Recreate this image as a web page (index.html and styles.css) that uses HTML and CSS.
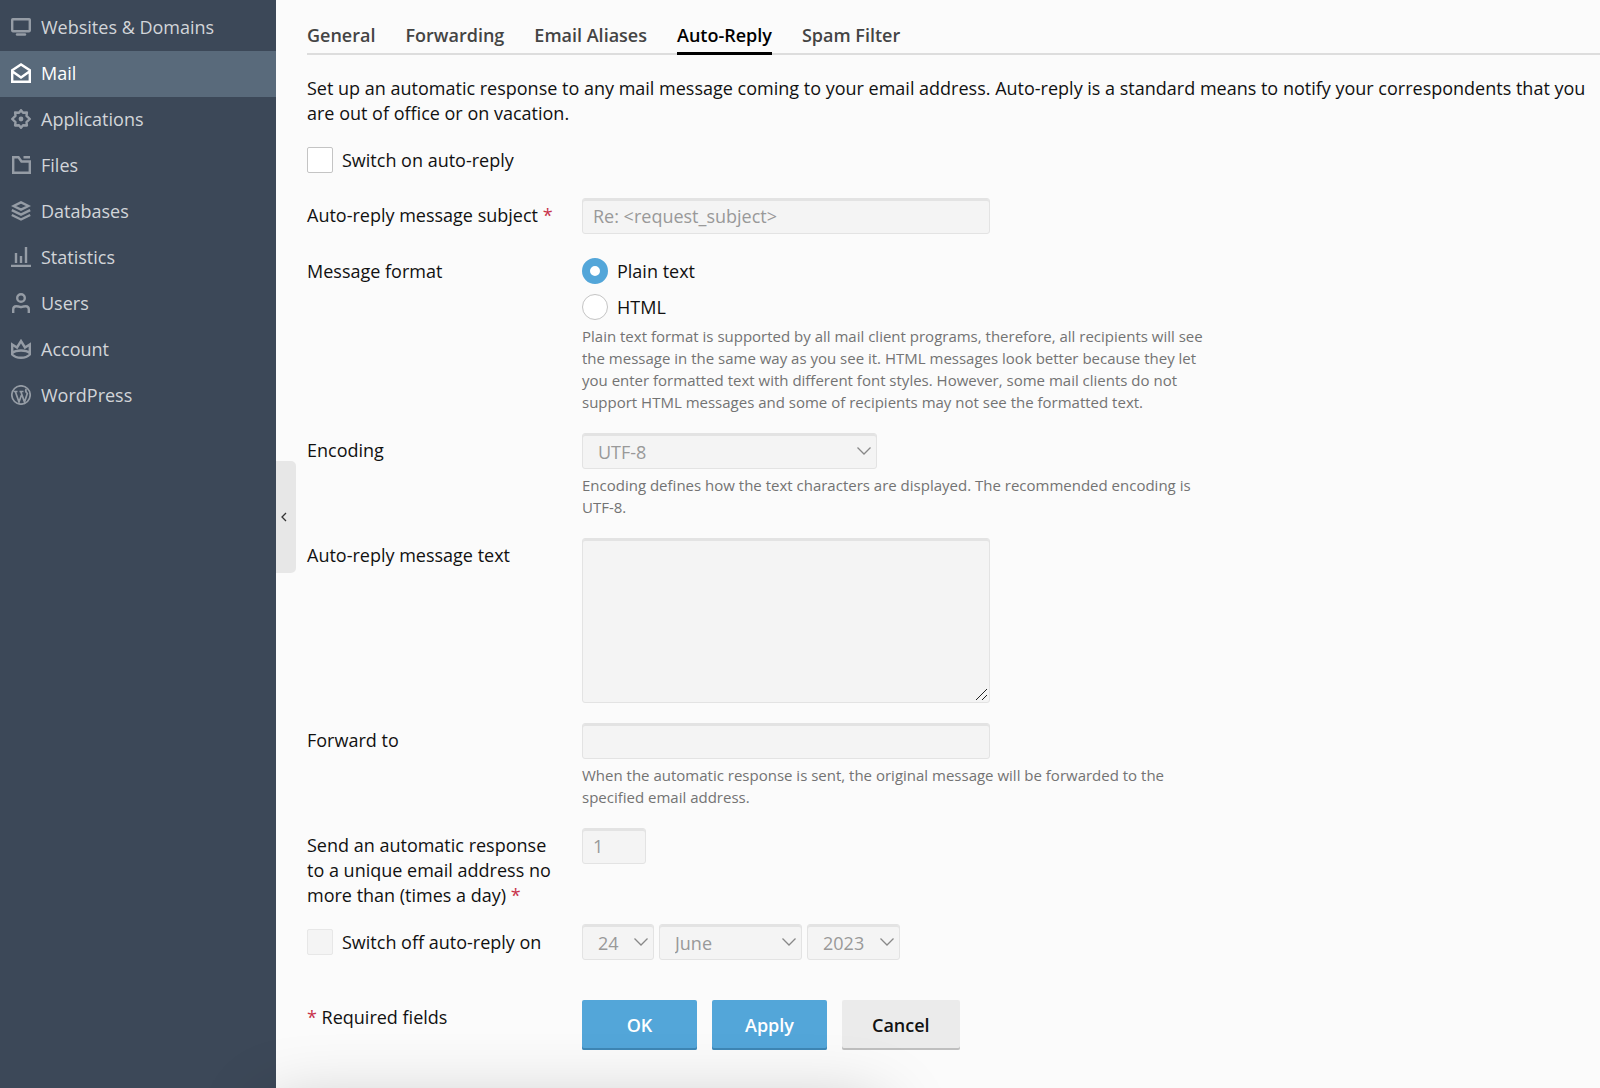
FILE: index.html
```html
<!DOCTYPE html>
<html lang="en">
<head>
    <meta charset="UTF-8">
    <meta name="viewport" content="width=device-width, initial-scale=1.0">
    <title>Auto-Reply</title>
    <link rel="stylesheet" href="styles.css">
</head>
<body>
    <div class="layout">
        <aside class="sidebar">
            <nav class="menu">
                <a href="#" class="menu-item">
                    <svg class="icon" viewBox="0 0 20 20"><rect x="1.200" y="2.200" width="17.600" height="12" rx=".6"/><path d="M6 17.500h8" stroke-linecap="round"/></svg>
                    Websites &amp; Domains
                </a>
                <a href="#" class="menu-item active">
                    <svg class="icon" viewBox="0 0 20 20"><path d="M1.200 7.200L10 1.500l8.800 5.700v11.600H1.200zM1.500 8.500L10 14.500l8.500-6"/></svg>
                    Mail
                </a>
                <a href="#" class="menu-item">
                    <svg class="icon" viewBox="0 0 20 20"><path stroke-linejoin="round" d="M8 3.800L10 1.200l2 2.600 3.900-.3-.4 3.300L18.800 10l-3.300 3.200.4 3.300-3.900-.3-2 2.600-2-2.600-3.900.3.400-3.300L1.200 10l3.300-3.200-.4-3.300z"/><circle class="fill" cx="10" cy="10" r="2.400"/></svg>
                    Applications
                </a>
                <a href="#" class="menu-item">
                    <svg class="icon" viewBox="0 0 20 20"><path d="M2.200 2.200h5.300l3 4.300h8.300v11.300H2.200zM12.500 2.200h6.500"/></svg>
                    Files
                </a>
                <a href="#" class="menu-item">
                    <svg class="icon" viewBox="0 0 20 20"><path d="M10 1.300l7.500 3.700-7.500 3.700L2.500 5zM.8 9.200L10 13.700l9.200-4.500M.8 14L10 18.500l9.200-4.500"/></svg>
                    Databases
                </a>
                <a href="#" class="menu-item">
                    <svg class="icon" viewBox="0 0 20 20"><path d="M0 19h20M5 6v10M10 9v7M15 0v16"/></svg>
                    Statistics
                </a>
                <a href="#" class="menu-item">
                    <svg class="icon" viewBox="0 0 20 20"><circle cx="10" cy="5" r="3.800"/><path d="M2.200 20v-3.500q0-3.300 3-3.300 2 0 4.800 1 2.800-1 4.800-1 3 0 3 3.300V20"/></svg>
                    Users
                </a>
                <a href="#" class="menu-item">
                    <svg class="icon" viewBox="0 0 20 20"><path d="M1.200 5.500l4.800 3L10 2l4 6.500 4.800-3v10q-3 3.300-8.800 3.300t-8.800-3.300zM1.200 14q3-2.500 8.800-2.500t8.800 2.500"/></svg>
                    Account
                </a>
                <a href="#" class="menu-item">
                    <svg class="icon wp" viewBox="0 0 20 20"><circle cx="10" cy="10" r="9.200"/><path d="M2.500 6.500h4M8.500 6.500h4M4.300 6.500l3.700 10.500L10.500 10M9.800 6.500l3.700 10.500 2.800-8.500q-2.600-2.500-1-4.500"/></svg>
                    WordPress
                </a>
            </nav>
            <button class="collapse" type="button" aria-label="Collapse menu">
                <svg viewBox="0 0 6 10"><path d="M5 1L1 5l4 4"/></svg>
            </button>
        </aside>

        <main class="content">
            <nav class="tabs">
                <a href="#" class="tab">General</a>
                <a href="#" class="tab">Forwarding</a>
                <a href="#" class="tab">Email Aliases</a>
                <a href="#" class="tab active">Auto-Reply</a>
                <a href="#" class="tab">Spam Filter</a>
            </nav>

            <p class="intro">Set up an automatic response to any mail message coming to your email address. Auto-reply is a standard means to notify your correspondents that you are out of office or on vacation.</p>

            <form class="form">
                <label class="choice switch-on">
                    <input type="checkbox" class="checkbox">
                    Switch on auto-reply
                </label>

                <div class="row">
                    <label class="label" for="subject">Auto-reply message subject <span class="required">*</span></label>
                    <div class="field">
                        <input type="text" id="subject" class="input" value="Re: &lt;request_subject&gt;" disabled>
                    </div>
                </div>

                <div class="row" role="radiogroup" aria-labelledby="format-label">
                    <span class="label" id="format-label">Message format</span>
                    <div class="field">
                        <div class="choices">
                            <label class="choice"><input type="radio" name="format" class="radio" checked> Plain text</label>
                            <label class="choice"><input type="radio" name="format" class="radio"> HTML</label>
                        </div>
                        <p class="hint">Plain text format is supported by all mail client programs, therefore, all recipients will see the message in the same way as you see it. HTML messages look better because they let you enter formatted text with different font styles. However, some mail clients do not support HTML messages and some of recipients may not see the formatted text.</p>
                    </div>
                </div>

                <div class="row">
                    <label class="label" for="encoding">Encoding</label>
                    <div class="field">
                        <select id="encoding" class="input select encoding" disabled>
                            <option>UTF-8</option>
                        </select>
                        <p class="hint">Encoding defines how the text characters are displayed. The recommended encoding is UTF-8.</p>
                    </div>
                </div>

                <div class="row">
                    <label class="label" for="text">Auto-reply message text</label>
                    <div class="field">
                        <textarea id="text" class="input textarea" disabled></textarea>
                    </div>
                </div>

                <div class="row">
                    <label class="label" for="forward">Forward to</label>
                    <div class="field">
                        <input type="text" id="forward" class="input" disabled>
                        <p class="hint">When the automatic response is sent, the original message will be forwarded to the specified email address.</p>
                    </div>
                </div>

                <div class="row limit-row">
                    <label class="label" for="limit">Send an automatic response to a unique email address no more than (times a day) <span class="required">*</span></label>
                    <div class="field">
                        <input type="text" id="limit" class="input limit" value="1" disabled>
                    </div>
                </div>

                <div class="row">
                    <label class="choice">
                        <input type="checkbox" class="checkbox" disabled>
                        Switch off auto-reply on
                    </label>
                    <div class="field date">
                        <select class="input select day" aria-label="Day" disabled>
                            <option>24</option>
                        </select>
                        <select class="input select month" aria-label="Month" disabled>
                            <option>June</option>
                        </select>
                        <select class="input select year" aria-label="Year" disabled>
                            <option>2023</option>
                        </select>
                    </div>
                </div>

                <div class="row actions">
                    <span class="label"><span class="required">*</span> Required fields</span>
                    <div class="buttons">
                        <button type="submit" class="button primary">OK</button>
                        <button type="button" class="button primary">Apply</button>
                        <button type="button" class="button">Cancel</button>
                    </div>
                </div>
            </form>
        </main>
    </div>
    <div class="bottom-shade"></div>
</body>
</html>
```

FILE: styles.css
```css
* {
    box-sizing: border-box;
}
body {
    margin: 0;
    font-family: 'Open Sans', sans-serif;
    font-size: 18px;
    line-height: 25px;
    color: #111;
    background: #fbfbfb;
}
p {
    margin: 0;
}
.layout {
    display: flex;
    min-height: 100vh;
}

/* Sidebar */
.sidebar {
    position: relative;
    flex: 0 0 276px;
    background: #3c4858;
}
.menu {
    display: flex;
    flex-direction: column;
    padding-top: 5px;
}
.menu-item {
    display: flex;
    align-items: center;
    gap: 10px;
    height: 46px;
    padding: 0 11px 2px;
    color: #d2d5d9;
    text-decoration: none;
}
.menu-item.active {
    color: #fff;
    background: #596a7b;
}
.icon {
    width: 20px;
    height: 20px;
    fill: none;
    stroke: #959ca5;
    stroke-width: 2.4;
}
.icon.wp {
    stroke-width: 1.7;
}
.icon .fill {
    fill: #959ca5;
    stroke: none;
}
.active .icon {
    stroke: #fff;
}
.collapse {
    position: absolute;
    top: 461px;
    left: 100%;
    width: 20px;
    height: 112px;
    padding: 0 4px 0 0;
    border: none;
    border-radius: 0 5px 5px 0;
    background: #e7e7e7;
    cursor: pointer;
}
.collapse svg {
    width: 6px;
    height: 10px;
    fill: none;
    stroke: #333;
    stroke-width: 1.3;
}

/* Content */
.content {
    flex: 1;
    min-width: 0;
    padding: 15px 0 37px 31px;
}
.tabs {
    display: flex;
    gap: 30px;
    margin-bottom: 21px;
    box-shadow: inset 0 -2px #ddd;
}
.tab {
    padding: 8px 0 4px;
    border-bottom: 3px solid transparent;
    font-weight: 600;
    color: #444;
    text-decoration: none;
}
.tab.active {
    color: #000;
    border-color: #000;
}
.intro {
    margin-bottom: 21px;
    padding-right: 10px;
}

/* Form */
.row {
    display: grid;
    grid-template-columns: 250px minmax(0, 640px);
    column-gap: 25px;
    margin-bottom: 20px;
}
.limit-row {
    margin-bottom: 16px;
}
.label {
    padding-top: 5px;
}
.required {
    color: #c8324a;
}
.choice {
    display: flex;
    align-items: center;
    gap: 9px;
}
.switch-on {
    margin-bottom: 25px;
}
.choices {
    display: flex;
    flex-direction: column;
    gap: 10px;
    padding-top: 4px;
}
.checkbox,
.radio {
    appearance: none;
    width: 26px;
    height: 26px;
    margin: 0;
    border: 1px solid #c4c4c4;
    border-radius: 2px;
    background: #fff;
}
.checkbox:disabled {
    border-color: #e7e7e7;
    background: #f4f4f4;
}
.radio {
    border-radius: 50%;
}
.radio:checked {
    border: 8px solid #53a6d9;
}
.input {
    display: block;
    width: 408px;
    max-width: 100%;
    height: 36px;
    padding: 0 10px;
    border: 1px solid #e3e3e3;
    border-radius: 3px;
    box-shadow: inset 0 2px #e3e3e3;
    font: inherit;
    color: #999;
    background: #f4f4f4;
}
.input:disabled {
    opacity: 1;
}
.select {
    appearance: none;
    padding: 2px 15px 0;
    background: #f4f4f4 url("data:image/svg+xml,%3Csvg xmlns='http://www.w3.org/2000/svg' width='14' height='8' fill='none' stroke='%23888' stroke-width='1.300'%3E%3Cpath d='M.5.5L7 7 13.500.5'/%3E%3C/svg%3E") no-repeat right 5px center;
}
.encoding {
    width: 295px;
}
.textarea {
    height: 165px;
    resize: both;
}
.textarea::-webkit-resizer {
    background: url("data:image/svg+xml,%3Csvg xmlns='http://www.w3.org/2000/svg' width='15' height='15' fill='none' stroke='%23222'%3E%3Cpath d='M2 13L13 2M8 13l5-5'/%3E%3C/svg%3E") no-repeat center;
}
.limit {
    width: 64px;
}
.hint {
    padding-top: 5px;
    font-size: 15px;
    line-height: 22px;
    color: #737373;
}
.date {
    display: flex;
    gap: 5px;
}
.day {
    width: 72px;
}
.month {
    width: 143px;
}
.year {
    width: 93px;
}

/* Buttons */
.actions {
    margin: 40px 0 0;
}
.buttons {
    display: flex;
    gap: 15px;
}
.button {
    min-width: 115px;
    height: 50px;
    padding: 0 30px;
    border: none;
    border-radius: 2px;
    box-shadow: inset 0 -2px #bfbfbf;
    font: inherit;
    font-weight: 600;
    color: #111;
    background: #ebebeb;
    cursor: pointer;
}
.button.primary {
    color: #fff;
    background: #53a6d9;
    box-shadow: inset 0 -2px #3e87b5;
}

.bottom-shade {
    position: fixed;
    left: 270px;
    bottom: -100px;
    width: 610px;
    height: 80px;
    box-shadow: 0 0 70px rgba(0, 0, 0, 0.25);
    pointer-events: none;
}
```
